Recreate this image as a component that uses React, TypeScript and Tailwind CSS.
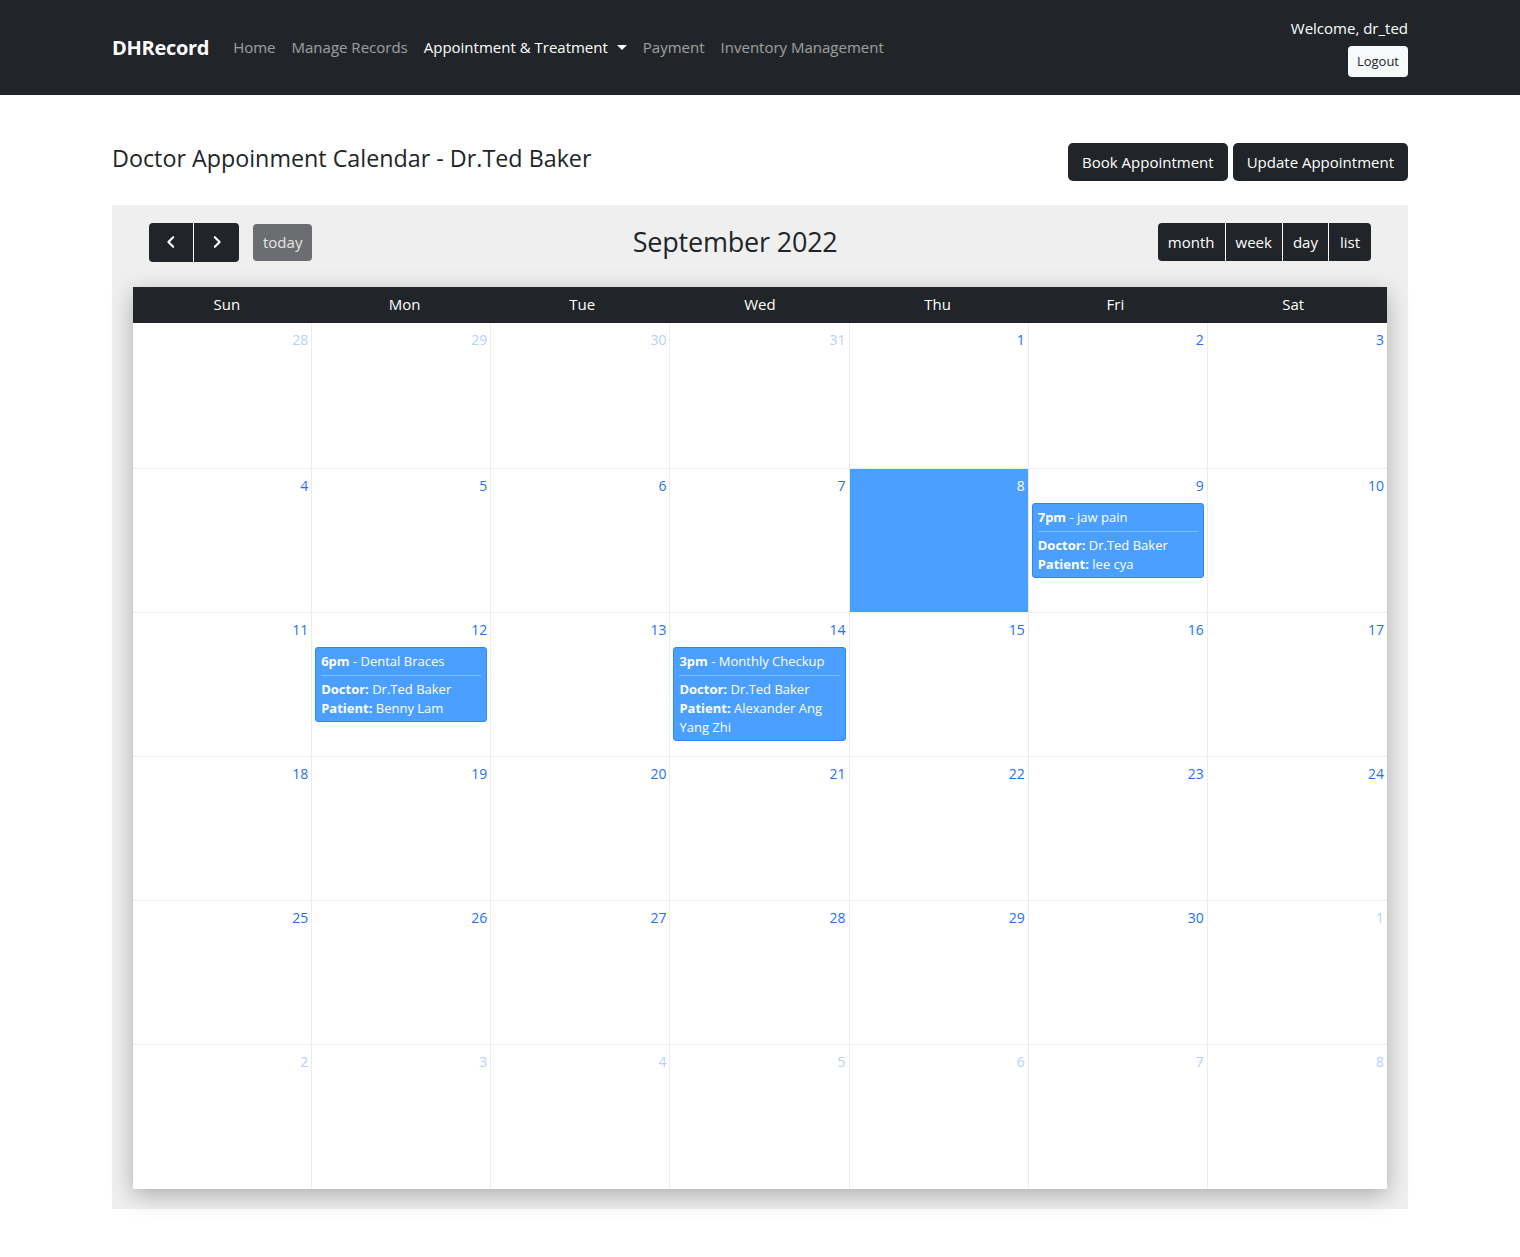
import React from 'react';

type Ev = { time: string; title: string; patient: string };

const font = { fontFamily: '"Open Sans", "Noto Sans", Arial, sans-serif' };

// 6 weeks of the September 2022 month view
const weeks: Array<Array<{ d: number; other?: boolean; today?: boolean; ev?: Ev }>> = [
  [{ d: 28, other: true }, { d: 29, other: true }, { d: 30, other: true }, { d: 31, other: true }, { d: 1 }, { d: 2 }, { d: 3 }],
  [{ d: 4 }, { d: 5 }, { d: 6 }, { d: 7 }, { d: 8, today: true }, { d: 9, ev: { time: '7pm', title: 'jaw pain', patient: 'lee cya' } }, { d: 10 }],
  [
    { d: 11 },
    { d: 12, ev: { time: '6pm', title: 'Dental Braces', patient: 'Benny Lam' } },
    { d: 13 },
    { d: 14, ev: { time: '3pm', title: 'Monthly Checkup', patient: 'Alexander Ang Yang Zhi' } },
    { d: 15 },
    { d: 16 },
    { d: 17 },
  ],
  [{ d: 18 }, { d: 19 }, { d: 20 }, { d: 21 }, { d: 22 }, { d: 23 }, { d: 24 }],
  [{ d: 25 }, { d: 26 }, { d: 27 }, { d: 28 }, { d: 29 }, { d: 30 }, { d: 1, other: true }],
  [{ d: 2, other: true }, { d: 3, other: true }, { d: 4, other: true }, { d: 5, other: true }, { d: 6, other: true }, { d: 7, other: true }, { d: 8, other: true }],
];

const days = ['Sun', 'Mon', 'Tue', 'Wed', 'Thu', 'Fri', 'Sat'];

function EventBox({ ev }: { ev: Ev }) {
  return (
    <div className="mx-[3px] mt-[7px] rounded-[3px] border border-[#2f86f6] bg-[#4a9fff] px-[5px] pt-[4px] pb-[3px] text-[13px] leading-[19px] text-white">
      <div className="border-b border-white/30 pb-[4px]">
        <b>{ev.time}</b> - {ev.title}
      </div>
      <div className="pt-[4px]">
        <b>Doctor:</b> Dr.Ted Baker
      </div>
      <div>
        <b>Patient:</b> {ev.patient}
      </div>
    </div>
  );
}

export default function App() {
  return (
    <div className="min-h-[1257px] bg-white text-[#212529]" style={font}>
      {/* Navbar */}
      <nav className="h-[95px] bg-[#212529]">
        <div className="mx-auto flex h-full w-[1296px] items-center justify-between">
          <div className="flex items-center">
            <span className="mr-[24px] text-[20px] font-bold tracking-[-0.3px] text-white">DHRecord</span>
            <div className="flex items-center gap-[16px] text-[15px] text-white/55">
              <span>Home</span>
              <span>Manage Records</span>
              <span className="flex items-center text-white">
                Appointment &amp; Treatment
                <span className="ml-[9px] inline-block h-0 w-0 border-x-[5px] border-t-[5px] border-x-transparent border-t-white" />
              </span>
              <span>Payment</span>
              <span>Inventory Management</span>
            </div>
          </div>
          <div className="flex flex-col items-end">
            <span className="text-[15px] leading-[20px] text-white">Welcome, dr_ted</span>
            <button className="mt-[8px] h-[31px] rounded-[4px] bg-[#f8f9fa] px-[9px] text-[13px] text-[#212529]">Logout</button>
          </div>
        </div>
      </nav>

      <main className="mx-auto w-[1296px]">
        {/* Title row */}
        <div className="flex items-start justify-between pt-[48px]">
          <h4 className="mt-[-2px] text-[23.3px] font-medium">Doctor Appoinment Calendar - Dr.Ted Baker</h4>
          <div className="flex gap-[5px]">
            <button className="h-[38px] rounded-[5px] bg-[#212529] px-[14px] text-[15px] text-white">Book Appointment</button>
            <button className="h-[38px] rounded-[5px] bg-[#212529] px-[14px] text-[15px] text-white">Update Appointment</button>
          </div>
        </div>

        {/* Calendar */}
        <div className="mt-[24px] bg-[#efefef] px-[21px] pt-[17px] pb-[20px]">
          <div className="flex items-center justify-between px-[16px]">
            <div className="flex items-center">
              <div className="flex h-[39px] overflow-hidden rounded-[4px]">
                <button className="flex w-[45px] items-center justify-center border-r border-white bg-[#212529] text-white">
                  <svg width="14" height="14" viewBox="0 0 16 16" fill="none" stroke="currentColor" strokeWidth="2.4" strokeLinecap="round" strokeLinejoin="round">
                    <path d="M10.5 2.5 5 8l5.5 5.5" />
                  </svg>
                </button>
                <button className="flex w-[45px] items-center justify-center bg-[#212529] text-white">
                  <svg width="14" height="14" viewBox="0 0 16 16" fill="none" stroke="currentColor" strokeWidth="2.4" strokeLinecap="round" strokeLinejoin="round">
                    <path d="M5.5 2.5 11 8l-5.5 5.5" />
                  </svg>
                </button>
              </div>
              <button className="ml-[14px] h-[37px] rounded-[4px] bg-[#6c6d70] px-[10px] text-[15px] text-[#e6e6e6]">today</button>
            </div>
            <h2 className="text-[27px] font-medium tracking-[-0.2px] text-[#212529]">September 2022</h2>
            <div className="flex h-[38px] overflow-hidden rounded-[4px] text-[15px] text-white">
              <button className="border-r border-white bg-[#212529] px-[10px]">month</button>
              <button className="border-r border-white bg-[#212529] px-[10px]">week</button>
              <button className="border-r border-white bg-[#212529] px-[10px]">day</button>
              <button className="bg-[#212529] px-[11px]">list</button>
            </div>
          </div>

          <div className="mt-[24px] bg-white shadow-[0_6px_22px_rgba(0,0,0,0.28)]">
            <div className="grid h-[36px] grid-cols-7 bg-[#212529] px-[5px] text-[15px] text-white">
              {days.map((d) => (
                <div key={d} className="flex items-center justify-center">
                  {d}
                </div>
              ))}
            </div>
            {weeks.map((w, wi) => (
              <div
                key={wi}
                className={`grid grid-cols-7 border-b border-[#ececec] last:border-b-0 ${wi === 0 ? 'h-[146px]' : 'h-[144px]'}`}
              >
                {w.map((c, ci) => (
                  <div key={ci} className={`${ci < 6 ? 'border-r border-[#ececec]' : ''} ${c.today ? 'bg-[#4a9fff]' : ''}`}>
                    <div
                      className={`pt-[7px] pr-[3px] text-right text-[14px] leading-[20px] ${
                        c.today ? 'text-white' : c.other ? 'text-[#b6d0fd]' : 'text-[#1f70f5]'
                      }`}
                    >
                      {c.d}
                    </div>
                    {c.ev && <EventBox ev={c.ev} />}
                  </div>
                ))}
              </div>
            ))}
          </div>
        </div>
      </main>
    </div>
  );
}
